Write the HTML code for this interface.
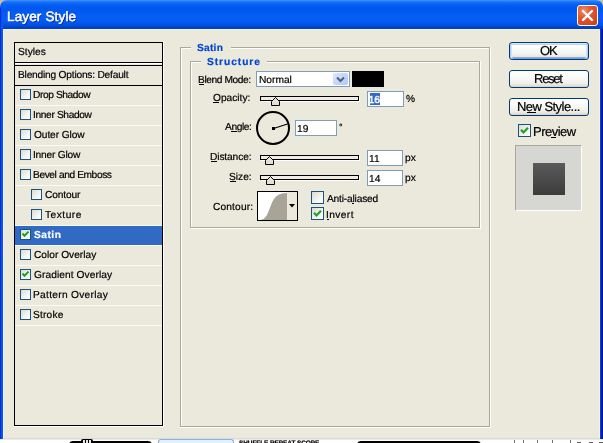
<!DOCTYPE html>
<html><head><meta charset="utf-8">
<style>
*{margin:0;padding:0;box-sizing:border-box}
html,body{width:603px;height:443px;overflow:hidden;background:#fff}
body{position:relative;font-family:"Liberation Sans",sans-serif;font-size:10.2px;color:#000}
.a{position:absolute}
.t{position:absolute;white-space:nowrap;line-height:12px;height:12px;text-rendering:geometricPrecision;will-change:transform;-webkit-text-stroke-width:0.2px}
.cb{position:absolute;border:1px solid #1c5180;background:linear-gradient(135deg,#dcdcd5 0,#f4f4f0 60%,#fff 100%)}
.btn{position:absolute;left:509px;width:80px;height:18px;border:1px solid #003c74;border-radius:3px;
 background:linear-gradient(#fff 0,#fcfcfb 30%,#f1f0ea 75%,#e4e1d6 90%,#d6d0c5 100%)}
.fld{position:absolute;background:#fff;border:1px solid #7f9db9}
</style></head><body>

<div class="a" style="left:0px;top:0px;width:603px;height:8px;background:#c2bfb0"></div>
<div class="a" style="left:0;top:0;width:603px;height:29px;border-radius:7px 7px 0 0;background:linear-gradient(#4498ff 0,#2a80fc 1px,#0e68f8 3px,#035af0 6px,#0058ee 10px,#065ef4 17px,#045af0 22px,#0050e2 25px,#0044d0 27px,#003cc0 29px)"></div>
<div class="t" style="left:7px;top:11px;font-size:13.5px;letter-spacing:0.15px;color:#fff;text-shadow:1px 1px 0 #0a2a9a;-webkit-text-stroke-width:0.5px">Layer Style</div>
<div class="a" style="left:577px;top:5px;width:21px;height:21px;border:1px solid #fff;border-radius:3px;background:radial-gradient(circle at 30% 25%,#ee8f6e 0,#e25a34 35%,#d84a22 70%,#c03a14 100%)"></div>
<svg class="a" style="left:577px;top:5px" width="21" height="21"><path d="M6 6L15 15M15 6L6 15" stroke="#fff" stroke-width="2.4" stroke-linecap="round"/></svg>
<div class="a" style="left:0px;top:8px;width:1px;height:431px;background:#0b2ed6"></div>
<div class="a" style="left:1px;top:8px;width:1px;height:431px;background:#0850ee"></div>
<div class="a" style="left:2px;top:8px;width:1px;height:431px;background:#0a58f2"></div>
<div class="a" style="left:600px;top:29px;width:1px;height:410px;background:#0a3ee4"></div>
<div class="a" style="left:601px;top:29px;width:1px;height:410px;background:#0024b0"></div>
<div class="a" style="left:602px;top:29px;width:1px;height:410px;background:#001a94"></div>
<div class="a" style="left:3px;top:29px;width:597px;height:410px;background:#ebe9db"></div>
<div class="a" style="left:3px;top:29px;width:597px;height:1px;background:#f8f4e2"></div>
<div class="a" style="left:3px;top:29px;width:1px;height:410px;background:#f8f4e2"></div>
<div class="a" style="left:599px;top:29px;width:1px;height:410px;background:#f8f4e2"></div>
<div class="a" style="left:3px;top:438px;width:597px;height:1px;background:#dcdad0"></div>
<div class="a" style="left:163px;top:41px;width:1px;height:386px;background:#fff"></div>
<div class="a" style="left:14px;top:426px;width:150px;height:1px;background:#fff"></div>
<div class="a" style="left:14px;top:42px;width:149px;height:384px;border:1px solid #000"></div>
<div class="t" style="left:18px;top:47px">Styles</div>
<div class="a" style="left:15px;top:62px;width:147px;height:1px;background:#000"></div>
<div class="a" style="left:15px;top:63px;width:147px;height:1px;background:#fff"></div>
<div class="a" style="left:15px;top:65px;width:147px;height:1px;background:#000"></div>
<div class="t" style="left:18px;top:70px;letter-spacing:-0.21px">Blending Options: Default</div>
<div class="a" style="left:15px;top:85px;width:147px;height:1px;background:#000"></div>
<div class="a" style="left:15px;top:105px;width:147px;height:1px;background:#fbfbf6"></div>
<div class="a" style="left:15px;top:125px;width:147px;height:1px;background:#fbfbf6"></div>
<div class="a" style="left:15px;top:145px;width:147px;height:1px;background:#fbfbf6"></div>
<div class="a" style="left:15px;top:165px;width:147px;height:1px;background:#fbfbf6"></div>
<div class="a" style="left:15px;top:185px;width:147px;height:1px;background:#fbfbf6"></div>
<div class="a" style="left:15px;top:205px;width:147px;height:1px;background:#fbfbf6"></div>
<div class="a" style="left:15px;top:225px;width:147px;height:1px;background:#fbfbf6"></div>
<div class="a" style="left:15px;top:245px;width:147px;height:1px;background:#fbfbf6"></div>
<div class="a" style="left:15px;top:265px;width:147px;height:1px;background:#fbfbf6"></div>
<div class="a" style="left:15px;top:285px;width:147px;height:1px;background:#fbfbf6"></div>
<div class="a" style="left:15px;top:305px;width:147px;height:1px;background:#fbfbf6"></div>
<div class="a" style="left:15px;top:325px;width:147px;height:1px;background:#fbfbf6"></div>
<div class="a" style="left:15px;top:226px;width:147px;height:19px;background:#316ac5"></div>
<div class="cb" style="left:20px;top:89px;width:11px;height:11px"></div>
<div class="t" style="left:33px;top:90px;letter-spacing:-0.4px">Drop Shadow</div>
<div class="cb" style="left:20px;top:109px;width:11px;height:11px"></div>
<div class="t" style="left:33px;top:110px;letter-spacing:-0.36px">Inner Shadow</div>
<div class="cb" style="left:20px;top:129px;width:11px;height:11px"></div>
<div class="t" style="left:34px;top:130px;letter-spacing:-0.1px">Outer Glow</div>
<div class="cb" style="left:20px;top:149px;width:11px;height:11px"></div>
<div class="t" style="left:33px;top:150px;letter-spacing:-0.22px">Inner Glow</div>
<div class="cb" style="left:20px;top:169px;width:11px;height:11px"></div>
<div class="t" style="left:33px;top:170px;letter-spacing:-0.4px">Bevel and Emboss</div>
<div class="cb" style="left:31px;top:189px;width:11px;height:11px"></div>
<div class="t" style="left:45px;top:190px;letter-spacing:-0.15px">Contour</div>
<div class="cb" style="left:31px;top:209px;width:11px;height:11px"></div>
<div class="t" style="left:45px;top:210px;letter-spacing:0.5px">Texture</div>
<div class="cb" style="left:20px;top:229px;width:11px;height:11px"></div>
<svg class="a" style="left:20px;top:229px" width="11" height="11"><path d="M2.5 4.5L4.5 6.8L8.6 2.6" stroke="#21a121" stroke-width="2" fill="none"/></svg>
<div class="t" style="left:34px;top:230px;font-weight:bold;letter-spacing:0.5px;color:#fff">Satin</div>
<div class="cb" style="left:20px;top:249px;width:11px;height:11px"></div>
<div class="t" style="left:34px;top:250px">Color Overlay</div>
<div class="cb" style="left:20px;top:269px;width:11px;height:11px"></div>
<svg class="a" style="left:20px;top:269px" width="11" height="11"><path d="M2.5 4.5L4.5 6.8L8.6 2.6" stroke="#21a121" stroke-width="2" fill="none"/></svg>
<div class="t" style="left:34px;top:270px;letter-spacing:0.07px">Gradient Overlay</div>
<div class="cb" style="left:20px;top:289px;width:11px;height:11px"></div>
<div class="t" style="left:33px;top:290px;letter-spacing:0.29px">Pattern Overlay</div>
<div class="cb" style="left:20px;top:309px;width:11px;height:11px"></div>
<div class="t" style="left:33px;top:310px;letter-spacing:0.2px">Stroke</div>
<div class="a" style="left:180px;top:47px;width:310px;height:1px;background:#aca899"></div>
<div class="a" style="left:180px;top:47px;width:1px;height:380px;background:#aca899"></div>
<div class="a" style="left:489px;top:47px;width:1px;height:380px;background:#aca899"></div>
<div class="a" style="left:180px;top:426px;width:310px;height:1px;background:#aca899"></div>
<div class="a" style="left:181px;top:48px;width:308px;height:1px;background:#fff"></div>
<div class="a" style="left:181px;top:48px;width:1px;height:378px;background:#fff"></div>
<div class="a" style="left:490px;top:47px;width:1px;height:381px;background:#fff"></div>
<div class="a" style="left:180px;top:427px;width:311px;height:1px;background:#fff"></div>
<div class="a" style="left:191px;top:40px;width:40px;height:14px;background:#ebe9db"></div>
<div class="t" style="left:197px;top:43px;font-weight:bold;letter-spacing:0.25px;color:#0046d5">Satin</div>
<div class="a" style="left:190px;top:61px;width:290px;height:1px;background:#aca899"></div>
<div class="a" style="left:190px;top:61px;width:1px;height:167px;background:#aca899"></div>
<div class="a" style="left:479px;top:61px;width:1px;height:167px;background:#aca899"></div>
<div class="a" style="left:190px;top:227px;width:290px;height:1px;background:#aca899"></div>
<div class="a" style="left:191px;top:62px;width:288px;height:1px;background:#fff"></div>
<div class="a" style="left:191px;top:62px;width:1px;height:165px;background:#fff"></div>
<div class="a" style="left:480px;top:61px;width:1px;height:168px;background:#fff"></div>
<div class="a" style="left:190px;top:228px;width:291px;height:1px;background:#fff"></div>
<div class="a" style="left:201px;top:54px;width:66px;height:14px;background:#ebe9db"></div>
<div class="t" style="left:207px;top:57px;font-weight:bold;letter-spacing:0.95px;color:#0046d5">Structure</div>
<div class="t" style="left:198px;top:75px;letter-spacing:-0.4px">Blend Mode:</div>
<div class="a" style="left:199px;top:84px;width:5px;height:1px;background:#000"></div>
<div class="fld" style="left:256px;top:71px;width:94px;height:16px"></div>
<div class="t" style="left:259px;top:75px">Normal</div>
<div class="a" style="left:333px;top:73px;width:15px;height:12px;border-radius:2px;background:linear-gradient(135deg,#dfe8fd 0,#c6d6fa 50%,#b3c8f5 100%)"></div>
<svg class="a" style="left:333px;top:73px" width="15" height="12"><path d="M4 4.5L7.5 8L11 4.5" stroke="#4d6185" stroke-width="2" fill="none"/></svg>
<div class="a" style="left:352px;top:71px;width:32px;height:16px;background:#000"></div>
<div class="t" style="left:213px;top:93px">Opacity:</div>
<div class="a" style="left:213px;top:102px;width:6px;height:1px;background:#000"></div>
<div class="a" style="left:260px;top:96px;width:99px;height:5px;background:#efede3;border:1px solid #000"></div>
<div class="a" style="left:261px;top:101px;width:99px;height:1px;background:#fff"></div>
<div class="a" style="left:359px;top:97px;width:1px;height:5px;background:#fff"></div>
<svg class="a" style="left:271px;top:96px" width="9" height="10"><path d="M0.5 5.5L4.5 1.5L8.5 5.5V9.5H0.5Z" fill="#e3e0d5" stroke="#000" stroke-width="1"/></svg>
<div class="fld" style="left:367px;top:91px;width:37px;height:16px"></div>
<div class="a" style="left:370px;top:93px;width:10px;height:12px;background:#316ac5"></div>
<div class="t" style="left:368.5px;top:95px;color:#fff;-webkit-text-stroke-width:0.45px;will-change:auto">16</div>
<div class="t" style="left:406px;top:94px">%</div>
<div class="t" style="left:225px;top:122px;letter-spacing:-0.4px">Angle:</div>
<div class="a" style="left:231px;top:131px;width:6px;height:1px;background:#000"></div>
<svg class="a" style="left:256px;top:111px" width="34" height="34"><circle cx="17" cy="17" r="16" fill="none" stroke="#000" stroke-width="2"/><path d="M17.5 17.5L31.5 13" stroke="#000" stroke-width="1.2"/><rect x="16" y="16" width="3" height="3" fill="#000"/></svg>
<div class="fld" style="left:295px;top:120px;width:42px;height:16px"></div>
<div class="t" style="left:297px;top:124px">19</div>
<div class="t" style="left:339px;top:121px;font-size:9px">°</div>
<div class="t" style="left:210px;top:152px;letter-spacing:-0.12px">Distance:</div>
<div class="a" style="left:211px;top:161px;width:6px;height:1px;background:#000"></div>
<div class="a" style="left:260px;top:155px;width:99px;height:5px;background:#efede3;border:1px solid #000"></div>
<div class="a" style="left:261px;top:160px;width:99px;height:1px;background:#fff"></div>
<div class="a" style="left:359px;top:156px;width:1px;height:5px;background:#fff"></div>
<svg class="a" style="left:265px;top:155px" width="9" height="10"><path d="M0.5 5.5L4.5 1.5L8.5 5.5V9.5H0.5Z" fill="#e3e0d5" stroke="#000" stroke-width="1"/></svg>
<div class="fld" style="left:367px;top:150px;width:36px;height:16px"></div>
<div class="t" style="left:369px;top:154px">11</div>
<div class="t" style="left:405px;top:153px">px</div>
<div class="t" style="left:229px;top:172px">Size:</div>
<div class="a" style="left:230px;top:181px;width:6px;height:1px;background:#000"></div>
<div class="a" style="left:260px;top:175px;width:99px;height:5px;background:#efede3;border:1px solid #000"></div>
<div class="a" style="left:261px;top:180px;width:99px;height:1px;background:#fff"></div>
<div class="a" style="left:359px;top:176px;width:1px;height:5px;background:#fff"></div>
<svg class="a" style="left:266px;top:175px" width="9" height="10"><path d="M0.5 5.5L4.5 1.5L8.5 5.5V9.5H0.5Z" fill="#e3e0d5" stroke="#000" stroke-width="1"/></svg>
<div class="fld" style="left:367px;top:170px;width:36px;height:16px"></div>
<div class="t" style="left:369px;top:174px">14</div>
<div class="t" style="left:405px;top:173px">px</div>
<div class="t" style="left:213px;top:202px;letter-spacing:0.14px">Contour:</div>
<div class="a" style="left:257px;top:191px;width:41px;height:30px;border:1px solid #000;background:#ebe9db"></div>
<svg class="a" style="left:258px;top:192px" width="29" height="28"><rect width="29" height="28" fill="#fff"/><path d="M1 28C9 28 10 20 13 13C16 5 20 1 29 1V28Z" fill="#a8a498"/></svg>
<svg class="a" style="left:289px;top:204px" width="6" height="4"><path d="M0 0H6L3 3.5Z" fill="#000"/></svg>
<div class="cb" style="left:311px;top:191px;width:13px;height:13px"></div>
<div class="t" style="left:327px;top:194px;letter-spacing:-0.18px">Anti-aliased</div>
<div class="a" style="left:352px;top:203px;width:2px;height:1px;background:#000"></div>
<div class="cb" style="left:311px;top:207px;width:13px;height:13px"></div>
<svg class="a" style="left:311px;top:207px" width="13" height="13"><path d="M3 5.8L5.5 8.5L10 3.8" stroke="#21a121" stroke-width="2.2" fill="none"/></svg>
<div class="t" style="left:326px;top:210px;letter-spacing:0.4px">Invert</div>
<div class="a" style="left:327px;top:219px;width:2px;height:1px;background:#000"></div>
<div class="btn" style="top:42px;box-shadow:inset 0 1px 0 #cee7ff,inset 0 2px 0 #bcd4f6,inset 1px 0 0 #b4cdf4,inset -1px 0 0 #b4cdf4,inset 2px 0 0 #d2e2fa,inset -2px 0 0 #d2e2fa,inset 0 -1px 0 #6f9ae6,inset 0 -2px 0 #89adf0"></div>
<div class="t" style="left:540px;top:45px;font-size:13px;letter-spacing:-1px">OK</div>
<div class="btn" style="top:70px"></div>
<div class="t" style="left:534px;top:73px;font-size:13px;letter-spacing:-1.25px">Reset</div>
<div class="btn" style="top:98px"></div>
<div class="t" style="left:517px;top:101px;font-size:13px;letter-spacing:-0.55px">New Style...</div>
<div class="a" style="left:527px;top:112px;width:9px;height:1px;background:#000"></div>
<div class="cb" style="left:518px;top:124px;width:13px;height:13px"></div>
<svg class="a" style="left:518px;top:124px" width="13" height="13"><path d="M3 5.8L5.5 8.5L10 3.8" stroke="#21a121" stroke-width="2.2" fill="none"/></svg>
<div class="t" style="left:533px;top:126px;font-size:13px;letter-spacing:-0.5px">Preview</div>
<div class="a" style="left:551px;top:137px;width:5px;height:1px;background:#000"></div>
<div class="a" style="left:515px;top:145px;width:67px;height:66px;border:1px solid;border-color:#aca899 #fff #fff #aca899;background:#d6d6d3"></div>
<div class="a" style="left:533px;top:163px;width:32px;height:32px;background:linear-gradient(#5a5a5a,#3c3c3c)"></div>
<div class="a" style="left:0px;top:439px;width:603px;height:4px;background:#fff"></div>
<div class="a" style="left:0px;top:439px;width:603px;height:1px;background:#ebebeb"></div>
<div class="a" style="left:69px;top:441px;width:83px;height:4px;background:#000;border-radius:4px 4px 0 0"></div>
<div class="a" style="left:81px;top:439px;width:12px;height:5px;background:#000;border-radius:2px 2px 0 0"></div>
<div class="a" style="left:83px;top:440px;width:2px;height:3px;background:#e8e8e8"></div>
<div class="a" style="left:86px;top:440px;width:2px;height:3px;background:#e8e8e8"></div>
<div class="a" style="left:89px;top:440px;width:2px;height:3px;background:#e8e8e8"></div>
<div class="a" style="left:158px;top:439px;width:76px;height:5px;background:#dff2ff;border:1px solid #8fb0ec;border-left-color:#9aa0b0;border-bottom:0;border-radius:3px 3px 0 0"></div>
<div class="t" style="left:239px;top:440px;font-size:6.5px;font-weight:bold;letter-spacing:-0.1px;line-height:8px;top:439.5px">SHUFFLE REPEAT SCOPE</div>
<div class="a" style="left:357px;top:441px;width:124px;height:4px;background:#000;border-radius:4px 4px 0 0"></div>
<div class="a" style="left:514px;top:440px;width:1px;height:3px;background:#707070"></div>
<div class="a" style="left:523px;top:440px;width:1px;height:3px;background:#707070"></div>
<div class="a" style="left:537px;top:440px;width:1px;height:3px;background:#707070"></div>
<div class="a" style="left:552px;top:440px;width:1px;height:3px;background:#707070"></div>
<div class="a" style="left:570px;top:440px;width:1px;height:3px;background:#707070"></div>
<div class="a" style="left:577px;top:442px;width:4px;height:1px;background:#606060"></div>
<div class="a" style="left:589px;top:442px;width:4px;height:1px;background:#606060"></div>
<div class="a" style="left:599px;top:442px;width:4px;height:1px;background:#606060"></div>
</body></html>
